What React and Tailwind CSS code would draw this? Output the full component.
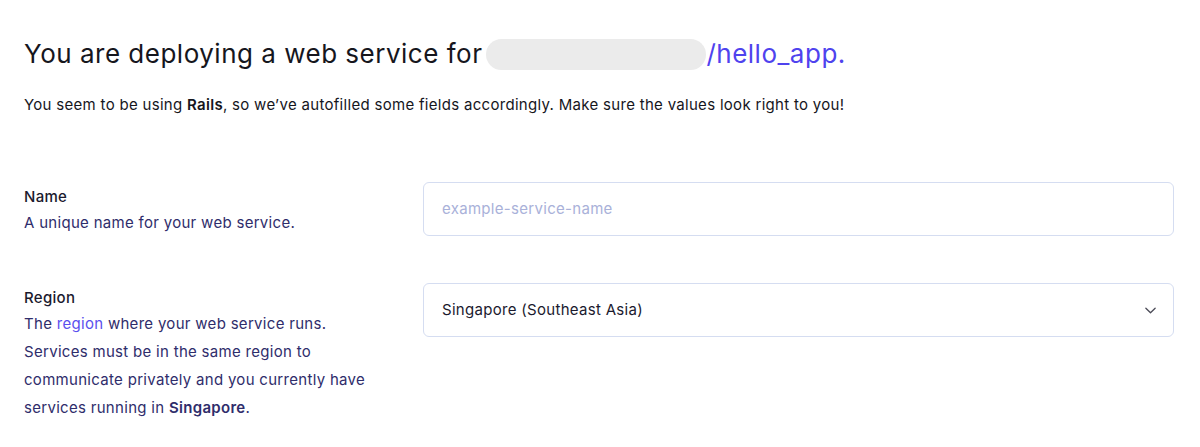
export default function App() {
  const font = { fontFamily: 'Inter, "Noto Sans", sans-serif' };
  return (
    <div className="w-[1200px] h-[447px] bg-white overflow-hidden pl-[24px] pr-[26px]" style={font}>
      <h1 className="pt-[38px] flex items-center text-[26px] leading-[32px] font-normal text-[#16161d] tracking-[0.5px]">
        <span>You are deploying a web service for</span>
        <span className="ml-[4px] inline-block w-[220px] h-[31px] rounded-full bg-[#ebebeb]"></span>
        <span className="text-[#4f43ee]">/hello_app.</span>
      </h1>
      <p className="mt-[23px] text-[15px] leading-[24px] text-[#16161d] tracking-[0.3px]">
        You seem to be using <span className="font-semibold">Rails</span>, so we’ve autofilled some fields accordingly. Make sure the values look right to you!
      </p>

      <div className="mt-[65px] grid grid-cols-[399px_1fr] items-start">
        <div className="pt-[3px] tracking-[0.3px]">
          <div className="text-[15px] leading-[24px] font-medium text-[#1b1a2e]">Name</div>
          <div className="text-[15px] leading-[28px] text-[#2f2d6b]">A unique name for your web service.</div>
        </div>
        <div className="h-[54px] rounded-[6px] border border-[#d5ddf1] flex items-center px-[18px] text-[15px] tracking-[0.3px] text-[#a9b1d9]">
          example-service-name
        </div>
      </div>

      <div className="mt-[46px] grid grid-cols-[399px_1fr] items-start">
        <div className="pt-[3px] tracking-[0.3px]">
          <div className="text-[15px] leading-[24px] font-medium text-[#1b1a2e]">Region</div>
          <div className="text-[15px] leading-[28px] text-[#2f2d6b] whitespace-nowrap">
            The <span className="text-[#5a50ee]">region</span> where your web service runs.<br />
            Services must be in the same region to<br />
            communicate privately and you currently have<br />
            services running in <span className="font-semibold">Singapore</span>.
          </div>
        </div>
        <div className="h-[54px] rounded-[6px] border border-[#d5ddf1] flex items-center justify-between pl-[18px] pr-[16px] text-[15px] tracking-[0.3px] text-[#1b1a2e]">
          <span>Singapore (Southeast Asia)</span>
          <svg width="13" height="13" viewBox="0 0 14 14" fill="none">
            <path d="M2 4.5 L7 9.5 L12 4.5" stroke="#4b4b57" strokeWidth="1.4" strokeLinecap="round" strokeLinejoin="round" />
          </svg>
        </div>
      </div>
    </div>
  );
}
